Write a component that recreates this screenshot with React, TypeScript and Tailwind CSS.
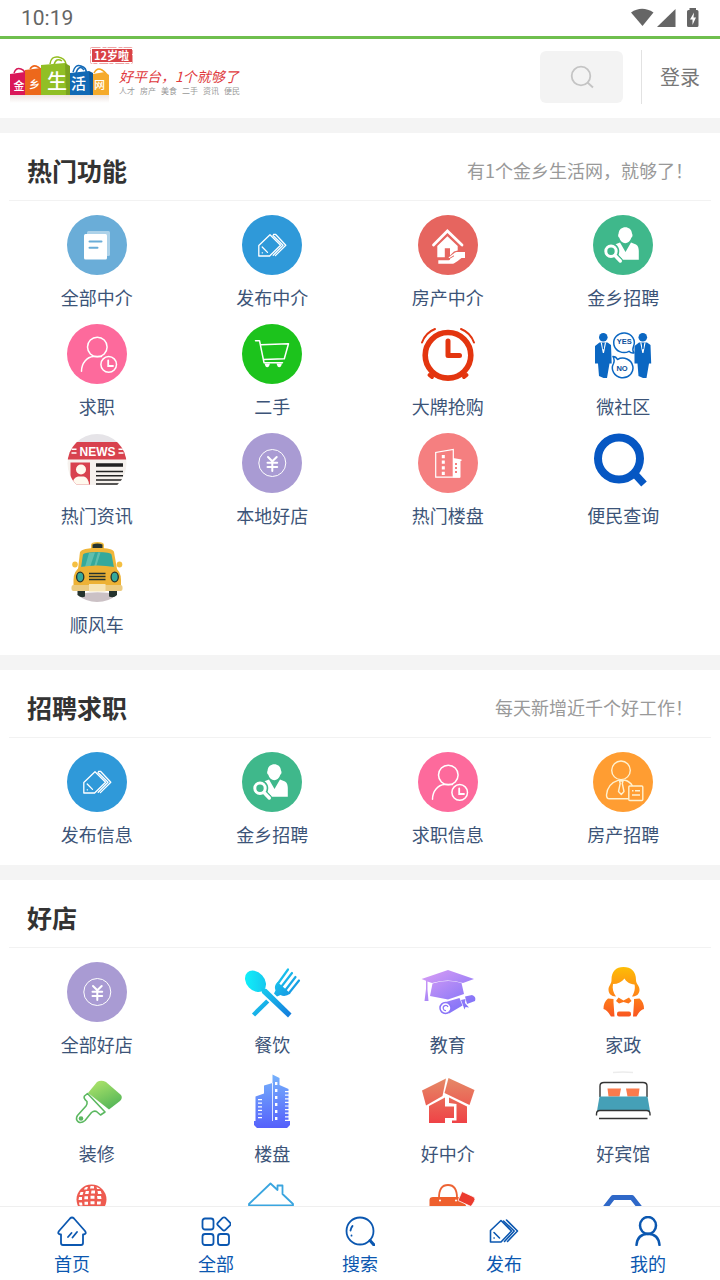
import type { ReactNode } from "react";

interface Entry {
  label?: string;
  alt?: string;
  icon: ReactNode;
}

interface SectionProps {
  title: string;
  note?: string;
  entries: Entry[];
}

function Glyph({ bg, children }: { bg?: string; children: ReactNode }) {
  return (
    <svg viewBox="0 0 60 60" className="size-[60px]" fill="none" aria-hidden="true">
      {bg && <circle cx="30" cy="30" r="30" fill={bg} />}
      {children}
    </svg>
  );
}

const DocIcon = () => (
  <Glyph bg="#6aadd8">
    <rect x="20" y="16" width="23" height="25" rx="1.5" fill="#fff" opacity=".45" />
    <rect x="17" y="19" width="23" height="25.5" rx="1.5" fill="#fff" />
    <path d="M22.5 26.5H34.5M22.5 32.7H30.5" stroke="#6aadd8" strokeWidth="2" strokeLinecap="round" />
  </Glyph>
);

const PublishIcon = () => (
  <Glyph bg="#2f99d9">
    <g stroke="#fff" strokeWidth="1.3" strokeLinejoin="round" strokeLinecap="round">
      <path d="M16.8 30.5 28 19.8 38.6 30.3 27.6 41H16.8Z" />
      <path d="M31.5 19.3H33.5L43.8 30.3 33.4 40.6M31 20.5 41 30.3 31.2 40.3" />
      <path d="M20.2 32 25.500 37.400M20.200 37.800h.3" />
    </g>
  </Glyph>
);

const HouseHandIcon = () => (
  <Glyph bg="#e6655f">
    <path d="M15.5 30 29.4 16 44 30" stroke="#fff" strokeWidth="2.8" strokeLinecap="round" />
    <path d="M19.3 31 29.4 21.2 39.7 31V35.5L36 36.5 32 40.5V33.3H26.8V42.3H19.3Z" fill="#fff" />
    <path
      d="M20.3 45.2H30.5C32 45.2 33 43.5 31 43L30.5 42.6 37 37.6C38.5 36.8 40 37 41.5 37H47V43H43.5C40 45.5 37 48.8 34 48.8H20.3Z"
      fill="#fff"
    />
    <path d="M31 43.8 36 40.8" stroke="#e6655f" strokeWidth="1" />
  </Glyph>
);

const RecruitIcon = () => (
  <Glyph bg="#3fb88b">
    <path
      d="M25.6 18.5C26 10 38.6 10 39 18.5 40 20 39.5 22 38.3 22.8 36.500 30 28 30 26.300 22.800 25 22 24.800 20 25.600 18.500Z"
      fill="#fff"
    />
    <path d="M27 27.500 32.500 37 38 27.500 43 29.500C45.500 31 45.700 33.500 45.800 36V44.800H30L25.500 40C27.500 35 25.500 31 22.500 29.200Z" fill="#fff" />
    <circle cx="18" cy="36.200" r="7.500" fill="#3fb88b" />
    <circle cx="18" cy="36.200" r="5.200" stroke="#fff" strokeWidth="3" />
    <path d="M22.500 41 27.300 46" stroke="#3fb88b" strokeWidth="5.500" />
    <path d="M22 40.500 27.300 46" stroke="#fff" strokeWidth="3.400" strokeLinecap="round" />
  </Glyph>
);

const JobIcon = () => (
  <Glyph bg="#fd6a9c">
    <g stroke="#fff" strokeWidth="1.5" strokeLinecap="round">
      <circle cx="30.3" cy="23" r="9.8" />
      <path d="M14.5 47.3C14.5 39 20 33 26.5 32.6H34.5" />
      <circle cx="41.7" cy="40.4" r="7.8" />
      <path d="M41.2 36.5V42H46" strokeWidth="1.8" />
    </g>
  </Glyph>
);

const CartIcon = () => (
  <Glyph bg="#1cc31c">
    <path
      d="M13.5 16.7H17.500L22 38.700H40.500M18.800 20.800 46.500 19.800 42.300 34.800 21.500 35.500"
      stroke="#fff"
      strokeWidth="1.500"
      strokeLinejoin="round"
      strokeLinecap="round"
    />
    <path d="M22.500 39.500h5.500l-1 2.800q-1.800 1.800-3.500 0ZM34.500 39.500h5.500l-1 2.800q-1.800 1.800-3.500 0Z" fill="#fff" />
  </Glyph>
);

const AlarmIcon = () => (
  <Glyph>
    <g stroke="#e3350f" strokeLinecap="round">
      <circle cx="30" cy="31.300" r="22.800" strokeWidth="5.600" />
      <path d="M30 17V31.500H41.500" strokeWidth="5" strokeLinejoin="round" />
      <path d="M4 18.500C6.500 11.500 10.500 7.500 17 5M43 5C49.500 7.500 53.500 11.500 56 18.500" strokeWidth="2" />
      <path d="M11.500 51 14 53M48.500 51 46 53" strokeWidth="4" />
    </g>
  </Glyph>
);

const Man = ({ x }: { x: number }) => (
  <g transform={`translate(${x} 0)`}>
    <circle cx="8.300" cy="13.200" r="4.300" fill="#0b67c2" />
    <path d="M4.500 18.500H12.500L16 21 16.700 39.500H14.500L12 54H8.500L4 52 3 39.500H0V22Z" fill="#0b67c2" />
    <path d="M6.300 18.500 8.400 29 10.500 18.500" stroke="#fff" strokeWidth="1.200" />
    <path d="M8.400 19.500V25" stroke="#0b67c2" strokeWidth="1.300" />
  </g>
);

const TalkIcon = () => (
  <Glyph>
    <Man x={2} />
    <Man x={41.5} />
    <g fill="#fff" stroke="#0b67c2" strokeWidth="1.500" strokeLinejoin="round">
      <path d="M36 27.300A10.300 9.800 0 1 1 40.500 22.500Q39 26 41 29 38 29.500 36 27.300Z" />
      <path d="M24.500 35.500A10.300 9.800 0 1 1 20.500 39.500Q22 36 20 32.500 23 32.500 24.500 35.500Z" />
    </g>
    <g fill="#0b4f9c" fontFamily="Liberation Sans" fontWeight="900" fontSize="7.500" textAnchor="middle">
      <text x="31.200" y="20.300">YES</text>
      <text x="29" y="47">NO</text>
    </g>
  </Glyph>
);

const NewsIcon = () => (
  <Glyph>
    <clipPath id="news-clip">
      <circle cx="30" cy="30.500" r="29.500" />
    </clipPath>
    <g clipPath="url(#news-clip)">
      <path d="M0 0H60V9H0Z" fill="#e6e4e8" />
      <path d="M0 26H60V52H0Z" fill="#f6f2ee" />
      <path d="M0 9H60V26.500H0Z" fill="#d8424e" />
      <rect x="3.500" y="29.500" width="19.500" height="22" fill="#d8424e" />
      <circle cx="14" cy="36.500" r="5" fill="#fff9ee" />
      <path d="M5.500 51.500Q5.500 45 11 43.500H17Q21.500 45 22 51.500Z" fill="#fff9ee" />
      <path d="M29 32H56" stroke="#222" strokeWidth="3.600" />
      <path d="M29 38.500H56M29 42.700H56M29 46.900H56M29 51H56" stroke="#222" strokeWidth="1.500" />
      <path d="M4.500 16.300H9.500M4.500 20H9.500M51.500 16.300H56.500M51.500 20H56.500" stroke="#fff" strokeWidth="1.400" />
      <text x="30.500" y="22.500" textAnchor="middle" fill="#fff" fontFamily="Liberation Sans" fontWeight="700" fontSize="12">
        NEWS
      </text>
    </g>
  </Glyph>
);

const YenIcon = () => (
  <Glyph bg="#a99bd3">
    <circle cx="30.300" cy="30" r="13.500" stroke="#fff" strokeWidth="1" />
    <path d="M26 24 30.300 28.300 34.700 24M30.300 28.300V38M25.500 29.700H35.200M25.500 34H35.200" stroke="#fff" strokeWidth="2" strokeLinecap="round" />
  </Glyph>
);

const EstateIcon = () => (
  <Glyph bg="#f57f80">
    <path d="M17.700 44.200V19.500L35.300 16.500V44.200ZM17.700 44.200H42" stroke="#fff" strokeWidth="1.200" />
    <path d="M35 25 43.500 26.500V28H42.500V44.500H35Z" fill="#fff" />
    <path d="M25.300 22V43" stroke="#fff" strokeWidth="3" strokeDasharray="3.200 2.400" />
    <path d="M38 30V41" stroke="#f57f80" strokeWidth="2" strokeDasharray="2 2" />
  </Glyph>
);

const QueryIcon = () => (
  <Glyph>
    <circle cx="26" cy="25.500" r="21" stroke="#0657c3" strokeWidth="8" />
    <path d="M40.500 39.500 51 51" stroke="#0657c3" strokeWidth="7.500" />
  </Glyph>
);

const TaxiIcon = () => (
  <Glyph>
    <path d="M10 52.500Q31 48 50 52.500 42 60 30 60 19 60 10 52.500Z" fill="#cbc1c5" />
    <path d="M10.500 47H18V54.500Q14.500 56.500 10.500 53ZM42 47H50V53Q46.500 56.500 42 54.500Z" fill="#25332e" />
    <path d="M24 9V3Q24 0 30.500 0T37 3V9Z" fill="#f4bf42" />
    <path d="M25.500 6V2.500Q30.500.500 35.500 2.500V6Z" fill="#25332e" />
    <path d="M13 10Q15 6 30.500 6T47 10L50 27H11Z" fill="#f0b63a" />
    <path d="M16 12.500Q17 10 30.500 10T44.500 12.500L47 25.500H14Z" fill="#35a99b" />
    <path d="M22 11 18 25H23L28 10.500ZM31 10.500 27 25H29L33.500 10.500Z" fill="#5fbfae" />
    <ellipse cx="8" cy="22.500" rx="2.800" ry="3" fill="#f4bf42" />
    <ellipse cx="52.500" cy="22.500" rx="2.800" ry="3" fill="#f4bf42" />
    <path d="M13 25Q30.500 22 47.500 25 54 29 54 38V46H6.500V38Q6.500 29 13 25Z" fill="#edb235" />
    <rect x="4.500" y="43" width="51" height="6" rx="2" fill="#eccb80" />
    <rect x="22" y="42" width="16.500" height="7.500" fill="#f7e5b5" />
    <g fill="#35a99b" stroke="#25332e" strokeWidth="1.300">
      <ellipse cx="13.200" cy="35" rx="3.600" ry="4.800" />
      <ellipse cx="47.700" cy="35" rx="3.600" ry="4.800" />
    </g>
    <path d="M22 31.500H38.500M22 34.500H38.500M22 37.500H38.500" stroke="#25332e" strokeWidth="1.600" />
  </Glyph>
);

const AgentIcon = () => (
  <Glyph bg="#ff9d32">
    <g stroke="#fff1cf" strokeWidth="1.400" strokeLinejoin="round">
      <circle cx="28" cy="18.300" r="9.300" />
      <path d="M35.500 46.800H16.500Q13.500 46.800 13.500 43 14.500 31.500 25 28.300H32Q37 29.500 39.500 34" />
      <path d="M26.500 29H30L29.300 31.500 31 39.500 28.300 42.500 25.500 39.500 27.200 31.500Z" />
      <rect x="35.800" y="34" width="14" height="14.500" rx="1" />
      <path d="M39 38.800H40.500M42 38.800H47M39 43H47" />
    </g>
  </Glyph>
);

const DiningIcon = () => (
  <Glyph>
    <linearGradient id="dining" x1="4" y1="10" x2="50" y2="54" gradientUnits="userSpaceOnUse">
      <stop stopColor="#0ff5fb" />
      <stop offset=".5" stopColor="#18b9ea" />
      <stop offset="1" stopColor="#1479dc" />
    </linearGradient>
    <path d="M25.700 39 11.500 53" stroke="url(#dining)" strokeWidth="4.500" />
    <path d="M35.500 20 48.500 31.500Q43 35.500 38.500 33L35 34.500 32 31.500 33.500 28.500Q31.500 24 35.500 20Z" fill="url(#dining)" />
    <path d="M36 21.500 46 7.500M39.500 24.500 50 11M43.500 28 53.500 15M47 31 57 18.500" stroke="url(#dining)" strokeWidth="2.200" strokeLinecap="round" />
    <ellipse cx="13.500" cy="19.300" rx="9" ry="12" transform="rotate(-43 13.500 19.300)" fill="url(#dining)" />
    <path d="M19 25.500 24.500 27 49.500 51.500 46 55.500 20 31Z" fill="url(#dining)" />
  </Glyph>
);

const EducationIcon = () => (
  <Glyph>
    <linearGradient id="edu" x1="12" y1="8" x2="38" y2="52" gradientUnits="userSpaceOnUse">
      <stop stopColor="#d49bf5" />
      <stop offset="1" stopColor="#8173f8" />
    </linearGradient>
    <g fill="url(#edu)">
      <path d="M3.500 17 30 8 56 17 45 21Q30 16 14 21L9.500 19.500V28L10.500 39H6.500L8 27V18.800Z" />
      <path d="M14.500 21.500Q30 17 43.500 21L46 32 30 37.500 12 34Z" />
      <path d="M26 40.500 41.500 36 44.500 43.500 31 51.500Z" />
      <path d="M47 34.500 54 33Q58.500 34.500 57 39L49 42Z" />
      <path d="M43 38 47.500 37 47 41 51 45.500 47.500 45 46.500 47.500 44.500 42Z" />
    </g>
    <circle cx="27.500" cy="46" r="5.500" fill="#fff" stroke="#8b75f8" strokeWidth="1.500" />
    <path d="M28 48.500A2.500 2.500 0 1 1 30 45" stroke="#8b75f8" strokeWidth="1.200" />
  </Glyph>
);

const MaidIcon = () => (
  <Glyph>
    <linearGradient id="maid" x1="30" y1="5" x2="30" y2="55" gradientUnits="userSpaceOnUse">
      <stop stopColor="#fdbd06" />
      <stop offset=".5" stopColor="#ff8b16" />
      <stop offset="1" stopColor="#f95421" />
    </linearGradient>
    <g fill="url(#maid)">
      <path d="M18.500 18C18.500 9 23 5 30.500 5S43 9 43 18C43 22 47 24 46.500 28.500 46 33 42.500 34.500 39 34.500 42.500 29 42 24 41.500 22.500 36.500 22 33 19.500 31.500 16.500 29 20 25 22 20 22 19 27 20.500 31 23 34.500 18 34.500 15.500 31.500 15.500 27.500 15.500 24 18.500 22 18.500 18Z" />
      <path d="M15 36.500 20.500 37V40.500L21.500 54.500H18Q14 47.500 10.500 47 10.500 40 15 36.500ZM46.500 36.500 41 37V40.500L40 54.500H43.500Q47 47.500 51 47 51 40 46.500 36.500Z" />
      <path d="M25.500 35.500 30.500 38.500 36 35.500 38.500 39 35.500 41.500 30.500 40 26 41.500 23 39Z" />
      <rect x="24" y="49.500" width="14" height="5" rx="2" />
    </g>
  </Glyph>
);

const BrushIcon = () => (
  <Glyph>
    <linearGradient id="brush" x1="32" y1="11" x2="45" y2="40" gradientUnits="userSpaceOnUse">
      <stop stopColor="#a5df68" />
      <stop offset="1" stopColor="#4eb356" />
    </linearGradient>
    <path d="M21 22 30 11Q34 8.500 39 11L54 24Q56 27 53 30L42 38.500Z" fill="url(#brush)" />
    <path
      d="M20.500 22.500 17.500 25Q16 27 20 30.500 20.500 33 19 35L10.500 44.500Q8 48.500 11.500 51 14.500 52.500 18 49.500L24.500 41.500Q27 39.500 29.500 40.500L33.500 44 38 41Z"
      stroke="#5bb860"
      strokeWidth="1.600"
      strokeLinejoin="round"
    />
    <circle cx="14" cy="47.500" r="2.300" fill="#5bb860" />
  </Glyph>
);

const TowersIcon = () => (
  <Glyph>
    <linearGradient id="tower" x1="30" y1="3" x2="34" y2="57" gradientUnits="userSpaceOnUse">
      <stop stopColor="#76b3fb" />
      <stop offset="1" stopColor="#5560fb" />
    </linearGradient>
    <path d="M12 50H13.500V25.500L22 22.500V14.500L30.500 12V3.500L37.500 7V14L46.500 18V50H48V54L45 57H15L12 54Z" fill="url(#tower)" />
    <path d="M30.500 12V50" stroke="#fff" strokeWidth=".8" />
    <path d="M34.200 11V49" stroke="#fff" strokeWidth="2.400" strokeDasharray="3 4" />
    <path d="M18 28V49M45 20V50" stroke="#fff" strokeWidth="4" strokeDasharray="1.200 2.400" />
  </Glyph>
);

const BrokerIcon = () => (
  <Glyph>
    <linearGradient id="broker" x1="30" y1="7" x2="30" y2="52" gradientUnits="userSpaceOnUse">
      <stop stopColor="#e58a67" />
      <stop offset="1" stopColor="#ef4246" />
    </linearGradient>
    <g fill="url(#broker)">
      <path d="M4 19.500 28 7.500 24.500 25 8 34.500Z" />
      <path d="M30.500 7 56.500 19 51.500 34 26.500 22Z" />
      <path d="M11 35 27 26.500V35.500H36V47H27V52H11Z" />
      <path d="M31 26.500 49 35.500V52H34V49.500H38.500V33L31 32Z" />
    </g>
  </Glyph>
);

const HotelIcon = () => (
  <Glyph>
    <path d="M20 1.500Q30 .500 40 1.500" stroke="#ececec" strokeWidth="1.500" />
    <path d="M7 26V15Q7 11.500 11 11.500H50Q54 11.500 54 15V26" stroke="#343434" strokeWidth="1.400" />
    <path d="M14.500 17.500H28L26.500 25.500H15.500ZM33 17.500H46.500L45.500 25.500H34.500Z" fill="#fb7b4d" />
    <path d="M6.500 25.500H54.500L57 40H4Z" fill="#45a0b7" />
    <path d="M3.500 44.500V43Q3.500 39.500 7 39.500H53.500Q57 39.500 57 43V44.500M6 47.500H54.500" stroke="#343434" strokeWidth="1.400" />
  </Glyph>
);

const MicIcon = () => (
  <Glyph>
    <clipPath id="mic-clip">
      <circle cx="24.500" cy="19.500" r="13.500" />
    </clipPath>
    <circle cx="24.500" cy="19.500" r="15" fill="#ee5b50" />
    <g fill="#fff" clipPath="url(#mic-clip)">
      <path d="M18 7h3l-1 2.500h-3zM23.500 6h3.500v2.500h-4zM29.500 6.500h3l1 2.500h-3.500z" />
      <path d="M13.500 12h3l-1 3h-3zM18.800 11h3.200l-.5 3h-3.500zM24.500 10.500h3.500v3h-4zM30.500 11h3.200l1 3h-3.700z" />
      <path d="M12 17h3v3h-3.500zM17.500 16.300h3.500v3h-3.700zM23.500 15.800h4v3h-4zM30 16h4l.5 3h-4z" />
      <path d="M12 22.500h3l.5 3h-3zM17.500 21.800h3.500v3h-3.500zM23.500 21.300h4v3h-4zM30 21.500h4l-.5 3h-3.500z" />
    </g>
  </Glyph>
);

const RoofIcon = () => (
  <Glyph>
    <path
      d="M7 24 28.500 3.500 35.500 10V5.500H40.500V14L51 24V25.500H7Z"
      stroke="#3aa5df"
      strokeWidth="1.800"
      strokeLinejoin="round"
    />
  </Glyph>
);

const BagIcon = () => (
  <Glyph>
    <path d="M21 18Q21 5 30 5T39 18" stroke="#ed6334" strokeWidth="1.800" />
    <path d="M11.500 28V20Q11.500 17 15 17H40Q45 18 49 28Z" fill="#ee5f2d" />
    <path d="M44 11.500 56 17Q58 19 56 22L53 26.500 40 20.500Z" fill="#eb3b2e" stroke="#fff" strokeWidth=".8" />
    <circle cx="22" cy="20.500" r="1" fill="#fff" />
    <circle cx="38" cy="20.500" r="1" fill="#fff" />
  </Glyph>
);

const CarIcon = () => (
  <Glyph>
    <path d="M11 29 20 17.500H39L48 29" stroke="#2f68c8" strokeWidth="5" strokeLinejoin="round" />
  </Glyph>
);

const hot: Entry[] = [
  { label: "全部中介", icon: <DocIcon /> },
  { label: "发布中介", icon: <PublishIcon /> },
  { label: "房产中介", icon: <HouseHandIcon /> },
  { label: "金乡招聘", icon: <RecruitIcon /> },
  { label: "求职", icon: <JobIcon /> },
  { label: "二手", icon: <CartIcon /> },
  { label: "大牌抢购", icon: <AlarmIcon /> },
  { label: "微社区", icon: <TalkIcon /> },
  { label: "热门资讯", icon: <NewsIcon /> },
  { label: "本地好店", icon: <YenIcon /> },
  { label: "热门楼盘", icon: <EstateIcon /> },
  { label: "便民查询", icon: <QueryIcon /> },
  { label: "顺风车", icon: <TaxiIcon /> },
];

const jobs: Entry[] = [
  { label: "发布信息", icon: <PublishIcon /> },
  { label: "金乡招聘", icon: <RecruitIcon /> },
  { label: "求职信息", icon: <JobIcon /> },
  { label: "房产招聘", icon: <AgentIcon /> },
];

const shops: Entry[] = [
  { label: "全部好店", icon: <YenIcon /> },
  { label: "餐饮", icon: <DiningIcon /> },
  { label: "教育", icon: <EducationIcon /> },
  { label: "家政", icon: <MaidIcon /> },
  { label: "装修", icon: <BrushIcon /> },
  { label: "楼盘", icon: <TowersIcon /> },
  { label: "好中介", icon: <BrokerIcon /> },
  { label: "好宾馆", icon: <HotelIcon /> },
  { alt: "娱乐", icon: <MicIcon /> },
  { alt: "家居", icon: <RoofIcon /> },
  { alt: "购物", icon: <BagIcon /> },
  { alt: "汽车", icon: <CarIcon /> },
];

const tabs: { label: string; icon: ReactNode }[] = [
  {
    label: "首页",
    icon: (
      <path d="M2 15 13 2.500Q15 .500 17 2.500L28 15Q30 18 26.500 18.500H26V27Q26 29 24 29H6Q4 29 4 27V18.500H3.500Q0 18 2 15ZM11 21 14.500 17M15.500 21.500 20 16" />
    ),
  },
  {
    label: "全部",
    icon: (
      <>
        <rect x="1.500" y="2.500" width="11" height="11" rx="2.500" />
        <rect x="1.500" y="18" width="11" height="11" rx="2.500" />
        <rect x="17" y="18" width="11" height="11" rx="2.500" />
        <rect x="17.700" y="2.700" width="10.500" height="10.500" rx="2" transform="rotate(45 23 8)" />
      </>
    ),
  },
  {
    label: "搜索",
    icon: (
      <>
        <circle cx="15" cy="15" r="13.500" />
        <path d="M5.500 14.500Q6 11.500 7.500 10M6.500 19.500v.2" />
        <path d="M25 24.500 29 29" strokeWidth="3" />
      </>
    ),
  },
  {
    label: "发布",
    icon: (
      <g strokeWidth="1.600">
        <path d="M1.500 14.500 12 4.500 22.500 15 12 26H1.500Z" />
        <path d="M14.500 5 25.200 15 15.500 25.500M17.500 4 28.500 15 18.500 25.500" />
        <path d="M5 16.500 10.500 22M5 22h.2" />
      </g>
    ),
  },
  {
    label: "我的",
    icon: (
      <g strokeWidth="2.500">
        <ellipse cx="15" cy="9.500" rx="8" ry="8.500" />
        <path d="M3.500 29Q4.500 18 15 17.700 25.500 18 26.500 29" />
      </g>
    ),
  },
];

function Logo() {
  return (
    <svg viewBox="0 0 240 60" className="h-[60px] w-[240px]" fill="none" role="img" aria-label="金乡生活网">
      <defs>
        <linearGradient id="floor" x1="0" y1="50" x2="0" y2="58" gradientUnits="userSpaceOnUse">
          <stop stopColor="#eee4e1" />
          <stop offset="1" stopColor="#fff" />
        </linearGradient>
      </defs>
      <path d="M2 50H101V58H2Z" fill="url(#floor)" />
      <g strokeWidth="1.500">
        <path d="M6 28Q8 22 13 24T17 31" stroke="#d61a58" />
        <path d="M22 24Q25 19 30 22T33 28" stroke="#ef6519" />
        <path d="M42 19Q43 11 50 12T58 19M46 20Q48 12 54 16" stroke="#93bd1e" />
        <path d="M65 27Q67 19 73 21T78 28M68 28Q71 19 76 25" stroke="#1269b7" />
        <path d="M86 28Q89 22 94 25T98 31" stroke="#f4a51b" />
      </g>
      <path d="M2 29 17 27V50H2Z" fill="#da1758" />
      <path d="M17 25 33 23V50H17Z" fill="#ed681b" />
      <path d="M33 20 57 18 62 21V50H33Z" fill="#91bf25" />
      <path d="M62 28 81 26 85 28V50H62Z" fill="#1269b5" />
      <path d="M85 29 97 27 101 30V50H85Z" fill="#f5aa2b" />
      <path d="M57 18 62 21V50H58ZM81 26 85 28V50H82Z" fill="#000" opacity=".15" />
      <g fill="#fff" fontFamily="Noto Sans CJK SC" fontWeight="500">
        <text x="5.500" y="45" fontSize="11">金</text>
        <text x="21" y="44" fontSize="11">乡</text>
        <text x="39" y="44" fontSize="20">生</text>
        <text x="63" y="44" fontSize="15">活</text>
        <text x="86" y="44" fontSize="11">网</text>
      </g>
      <rect x="84" y="4" width="40" height="13" fill="#d94246" />
      <rect x="82.500" y="2.500" width="42" height="16" rx="1" stroke="#eea4a4" strokeDasharray="9 2 4 1" />
      <text x="86" y="14.500" fontSize="11" fontWeight="700" fill="#fff" fontFamily="Noto Sans CJK SC">
        12岁啦
      </text>
      <g fontFamily="Noto Sans CJK SC">
        <text x="111" y="37" fontSize="14" fontStyle="italic" fill="#e0393d">
          好平台，1个就够了
        </text>
        <text x="111" y="49" fontSize="8" fill="#999">
          <tspan>人才</tspan>
          <tspan x="132">房产</tspan>
          <tspan x="153">美食</tspan>
          <tspan x="174">二手</tspan>
          <tspan x="195">资讯</tspan>
          <tspan x="216">便民</tspan>
        </text>
      </g>
    </svg>
  );
}

function StatusBar() {
  return (
    <div className="flex h-[39px] shrink-0 items-center justify-between border-b-[3px] border-[#6fbf4e] px-[21px] text-[#656565]">
      <span className="font-[Roboto,sans-serif] text-[21px] leading-6">10:19</span>
      <svg viewBox="0 0 68 20" className="h-5 w-[68px]" fill="currentColor" aria-hidden="true">
        <path d="M0 4.500Q11 -3 22.500 4.500L11.500 18Z" />
        <path d="M44.500 1V19H26Z" />
        <path d="M58.500 0H65V2H66Q67.500 2 67.500 3.500V17.500Q67.500 19 66 19H57.500Q56 19 56 17.500V3.500Q56 2 57.500 2H58.500Z" />
        <path d="M63 4.500 59 11.500H61.500V17L65 9.500H62.500Z" fill="#fff" />
      </svg>
    </div>
  );
}

function Section({ title, note, entries }: SectionProps) {
  return (
    <section className="bg-white px-[9px] pb-1">
      <header className="flex h-[68px] items-center justify-between border-b border-[#f2f2f2] px-[18px] pt-1.5">
        <h2 className="text-[25px] leading-8 font-bold text-[#333]">{title}</h2>
        {note && <p className="text-lg leading-6 text-[#999]">{note}</p>}
      </header>
      <ul className="grid grid-cols-4 pt-[14px]">
        {entries.map((entry) => (
          <li key={entry.label ?? entry.alt}>
            <a
              href="#"
              aria-label={entry.alt}
              className="flex flex-col items-center gap-2.5 pb-[15px] text-lg leading-6 text-[#3c5478]"
            >
              {entry.icon}
              {entry.label && <span>{entry.label}</span>}
            </a>
          </li>
        ))}
      </ul>
    </section>
  );
}

export default function App() {
  return (
    <div className="flex h-screen flex-col overflow-hidden bg-white font-['Noto_Sans_CJK_SC',sans-serif]">
      <StatusBar />
      <header className="flex h-[79px] shrink-0 items-center justify-between pr-5 pb-1 pl-2">
        <a href="#" className="-mt-1">
          <Logo />
        </a>
        <div className="flex items-center gap-[18px]">
          <button
            type="button"
            aria-label="搜索"
            className="flex h-[52px] w-[83px] items-center justify-center rounded-md bg-[#f3f3f3]"
          >
            <svg viewBox="0 0 24 24" className="size-6" fill="none" stroke="#c4c4c4" strokeWidth="1.800" aria-hidden="true">
              <circle cx="11" cy="11" r="9.300" />
              <path d="M17.500 17.500 23 22.500" />
            </svg>
          </button>
          <div className="flex h-[54px] items-center border-l border-[#e2e2e2] pl-[18px]">
            <a href="#" className="text-xl leading-6 text-[#777]">
              登录
            </a>
          </div>
        </div>
      </header>
      <main className="flex min-h-0 flex-1 flex-col gap-[15px] overflow-y-auto bg-[#f4f4f4] pt-[15px] [scrollbar-width:none]">
        <Section title="热门功能" note="有1个金乡生活网，就够了！" entries={hot} />
        <Section title="招聘求职" note="每天新增近千个好工作！" entries={jobs} />
        <Section title="好店" entries={shops} />
      </main>
      <nav className="grid h-[74px] shrink-0 grid-cols-5 border-t border-[#efefef] bg-white">
        {tabs.map((tab) => (
          <a key={tab.label} href="#" className="flex flex-col items-center gap-[5px] pt-[9px] text-lg leading-6 text-[#0b57b0]">
            <svg
              viewBox="0 0 30 30"
              className="size-[30px]"
              fill="none"
              stroke="currentColor"
              strokeWidth="1.800"
              strokeLinecap="round"
              strokeLinejoin="round"
              aria-hidden="true"
            >
              {tab.icon}
            </svg>
            <span>{tab.label}</span>
          </a>
        ))}
      </nav>
    </div>
  );
}
